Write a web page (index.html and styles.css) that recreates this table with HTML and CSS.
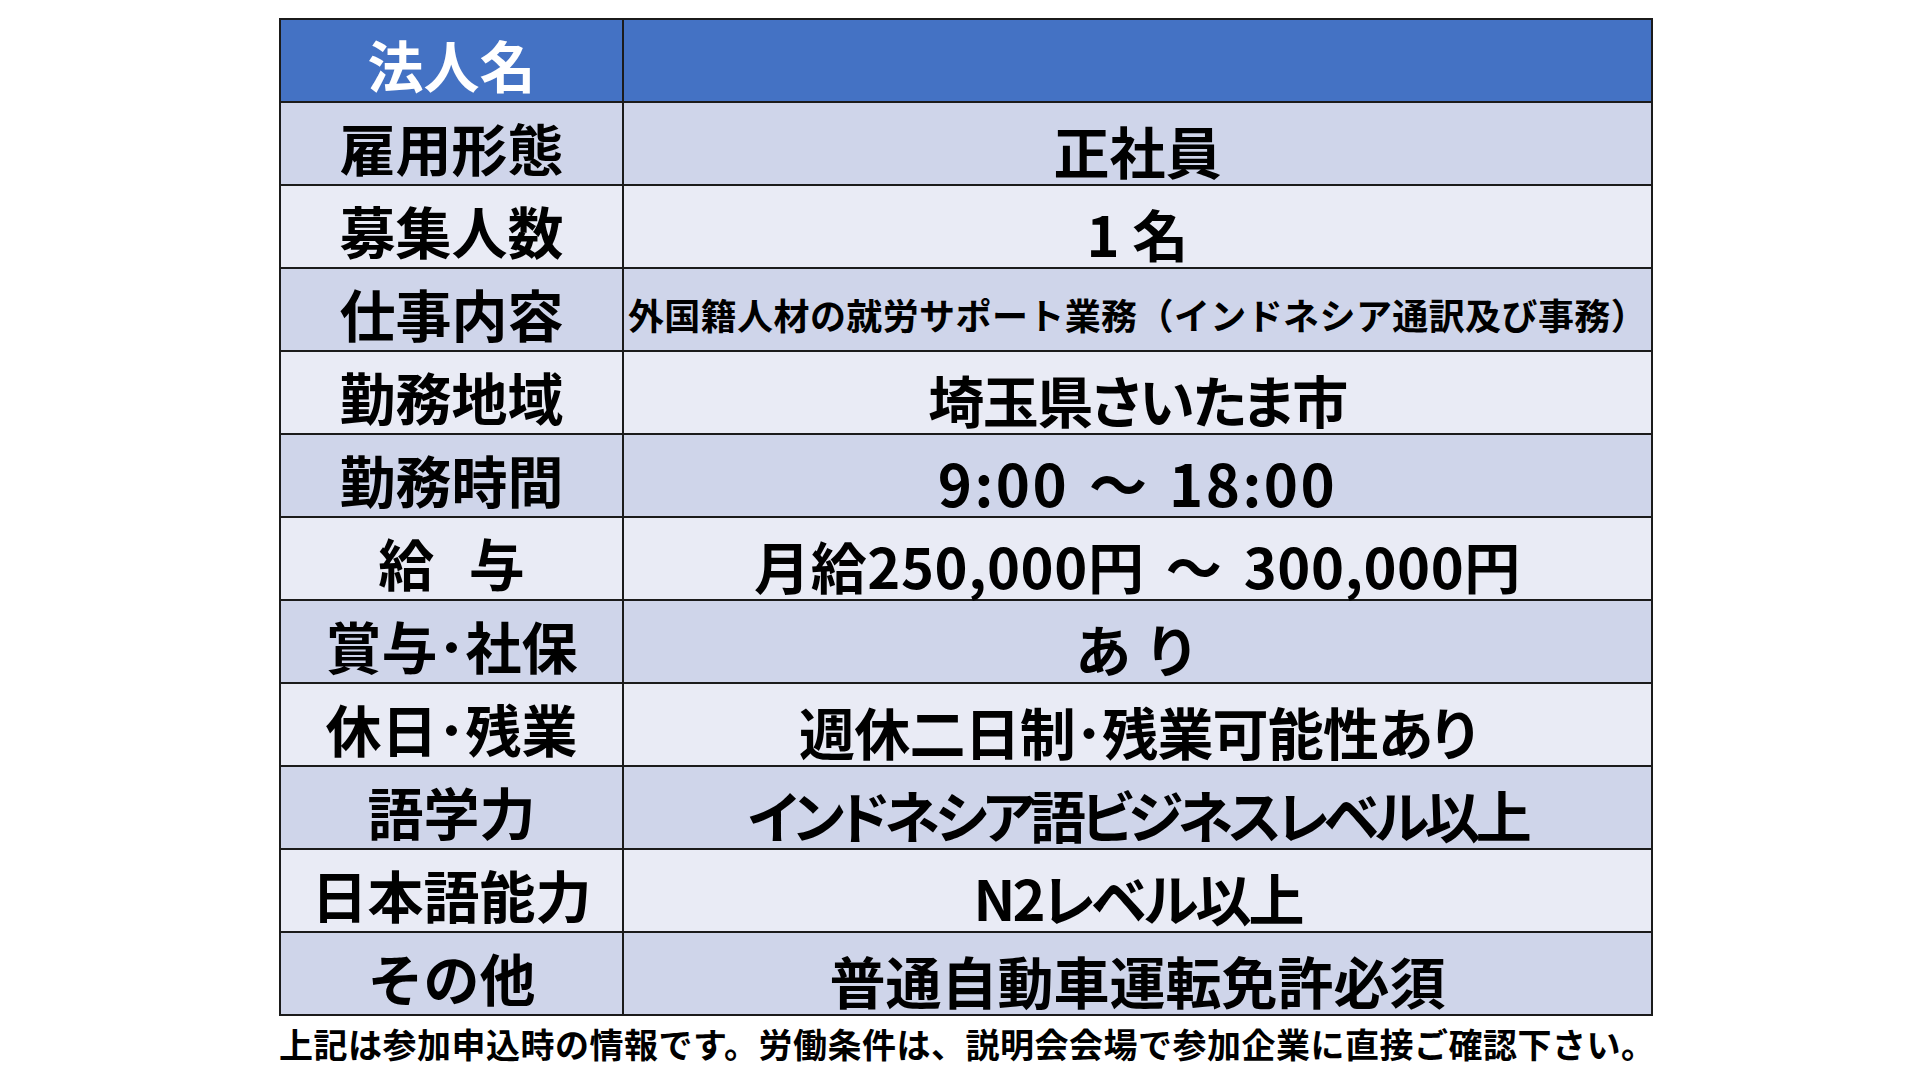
FILE: index.html
```html
<!DOCTYPE html>
<html lang="ja">
<head>
<meta charset="utf-8">
<title>求人情報</title>
<link rel="stylesheet" href="styles.css">
</head>
<body>
<div class="page">
  <div class="sheet">
    <div class="cell label head">法人名</div>
    <div class="cell value head"></div>

    <div class="cell label dark">雇用形態</div>
    <div class="cell value dark">正社員</div>

    <div class="cell label light">募集人数</div>
    <div class="cell value light">1 名</div>

    <div class="cell label dark">仕事内容</div>
    <div class="cell value dark small">外国籍人材の就労サポート業務（インドネシア通訳及び事務）</div>

    <div class="cell label light">勤務地域</div>
    <div class="cell value light kana tight1">埼玉県さいたま市</div>

    <div class="cell label dark">勤務時間</div>
    <div class="cell value dark num">9:00 ～ 18:00</div>

    <div class="cell label light spaced">給 与</div>
    <div class="cell value light pay">月給250,000円 ～ 300,000円</div>

    <div class="cell label dark">賞与･社保</div>
    <div class="cell value dark">あ り</div>

    <div class="cell label light">休日･残業</div>
    <div class="cell value light kana tight0">週休二日制･残業可能性あり</div>

    <div class="cell label dark">語学力</div>
    <div class="cell value dark kana tight5">インドネシア語ビジネスレベル以上</div>

    <div class="cell label light">日本語能力</div>
    <div class="cell value light kana tight3">N2レベル以上</div>

    <div class="cell label dark">その他</div>
    <div class="cell value dark">普通自動車運転免許必須</div>
  </div>
  <p class="note">上記は参加申込時の情報です。労働条件は、説明会会場で参加企業に直接ご確認下さい。</p>
</div>
</body>
</html>
```

FILE: styles.css
```css
html, body {
  margin: 0;
  padding: 0;
  background: #ffffff;
}

body {
  width: 1920px;
  height: 1080px;
  overflow: hidden;
  font-family: "Noto Sans CJK JP", "Noto Sans", sans-serif;
  font-weight: 700;
  color: #000000;
}

.page {
  padding: 18px 0 0 279px;
}

.sheet {
  display: inline-grid;
  grid-template-columns: 341px 1027px;
  grid-auto-rows: 81px;
  gap: 2px;
  border: 2px solid #1b1b1b;
  background: #1b1b1b;
  vertical-align: top;
}

.cell {
  display: flex;
  align-items: center;
  justify-content: center;
  font-size: 56px;
  line-height: 1;
  white-space: nowrap;
}

.label {
  padding-top: 6px;
}

.value {
  padding-top: 12px;
}

.head {
  background: #4472c4;
  color: #ffffff;
}

.dark {
  background: #cfd5ea;
}

.light {
  background: #e9ebf5;
}

.small {
  font-size: 36px;
  letter-spacing: 0.4px;
  padding-top: 8px;
}

.kana {
  font-feature-settings: "palt" 1;
}

.tight0 {
  letter-spacing: -0.8px;
}

.tight1 {
  letter-spacing: -1.5px;
}

.tight3 {
  letter-spacing: -3px;
}

.tight5 {
  letter-spacing: -4.7px;
}

.num {
  font-size: 58px;
  letter-spacing: 2.5px;
  word-spacing: 4px;
}

.pay {
  letter-spacing: 0.6px;
  word-spacing: 8px;
}

.spaced {
  word-spacing: 22px;
}

.note {
  margin: 8px 0 0 0;
  font-size: 34px;
  letter-spacing: 0.5px;
  line-height: 1.2;
  white-space: nowrap;
}
```
